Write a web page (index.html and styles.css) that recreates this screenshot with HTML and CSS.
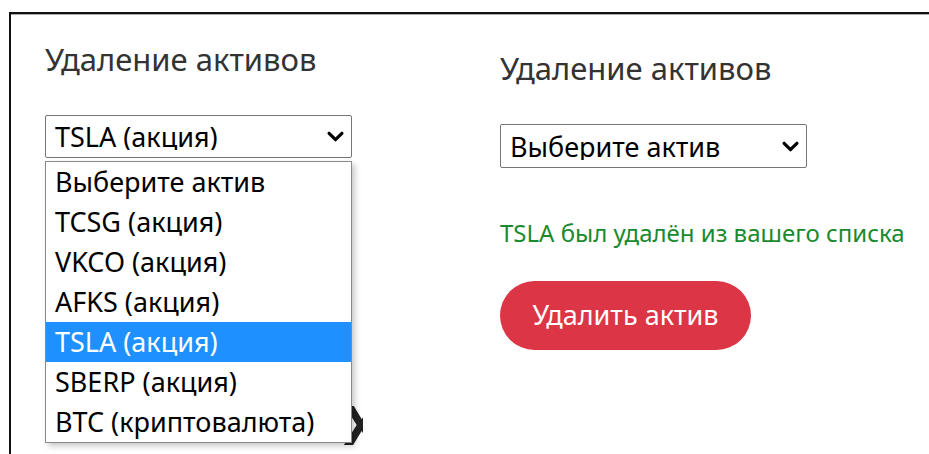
FILE: index.html
```html
<!DOCTYPE html>
<html lang="ru">
<head>
<meta charset="utf-8">
<title>Удаление активов</title>
<link rel="stylesheet" href="styles.css">
</head>
<body>
<div class="frame">
  <section class="panel panel-open">
    <h2 class="panel-title">Удаление активов</h2>
    <div class="picker">
      <div class="select-wrap">
        <select class="select" aria-label="Актив">
          <option>TSLA (акция)</option>
        </select>
        <svg class="chevron" viewBox="0 0 16 10" aria-hidden="true"><polyline points="2,2 8,8 14,2"/></svg>
      </div>
      <ul class="options" role="listbox">
        <li class="option">Выберите актив</li>
        <li class="option">TCSG (акция)</li>
        <li class="option">VKCO (акция)</li>
        <li class="option">AFKS (акция)</li>
        <li class="option is-active">TSLA (акция)</li>
        <li class="option">SBERP (акция)</li>
        <li class="option">BTC (криптовалюта)</li>
      </ul>
    </div>
    <div class="summary"><span class="summary-text">X</span></div>
  </section>

  <section class="panel panel-done">
    <h2 class="panel-title">Удаление активов</h2>
    <div class="select-wrap">
      <select class="select" aria-label="Актив">
        <option>Выберите актив</option>
      </select>
      <svg class="chevron" viewBox="0 0 16 10" aria-hidden="true"><polyline points="2,2 8,8 14,2"/></svg>
    </div>
    <p class="notice">TSLA был удалён из вашего списка</p>
    <button class="btn-danger" type="button">Удалить актив</button>
  </section>
</div>
</body>
</html>
```

FILE: styles.css
```css
* { box-sizing: border-box; }

html, body {
  margin: 0;
  height: 100%;
  background: #fff;
  overflow: hidden;
}

body {
  font-family: "Noto Sans", "Open Sans", sans-serif;
  color: #000;
}

.frame {
  margin: 12px 0 0 9px;
  height: calc(100% - 12px);
  border-top: 2px solid #111;
  border-left: 2px solid #111;
  box-shadow: inset 0 1px 0 #a8a8a8;
  padding-left: 34px;
  display: grid;
  grid-template-columns: 455px 1fr;
  align-items: start;
}

.panel {
  display: flex;
  flex-direction: column;
  align-items: flex-start;
}

.panel-title {
  margin: 0;
  font-size: 31px;
  font-weight: 400;
  line-height: 1;
  color: #333;
}

.panel-open .panel-title { margin-top: 30px; }
.panel-done .panel-title { margin-top: 39px; }

.picker {
  position: relative;
  margin-top: 40px;
}

.select-wrap {
  display: grid;
  align-items: center;
}

.select-wrap > * { grid-area: 1 / 1; }

.select {
  -webkit-appearance: none;
  appearance: none;
  width: 307px;
  height: 43px;
  margin: 0;
  padding: 0 30px 0 9px;
  border: 1px solid #767676;
  border-radius: 2px;
  background: #fff;
  font-family: inherit;
  font-size: 27px;
  color: #000;
  line-height: 1;
}

.chevron {
  justify-self: end;
  margin-right: 8px;
  width: 17px;
  height: 11px;
  fill: none;
  stroke: #000;
  stroke-width: 3;
  stroke-linecap: round;
  stroke-linejoin: round;
  pointer-events: none;
}

/* open list of the left picker, laid over the content below */
.options {
  position: absolute;
  top: 46px;
  left: 0;
  z-index: 2;
  width: 307px;
  margin: 0;
  padding: 0;
  list-style: none;
  background: #fff;
  border: 1px solid #8a8a8a;
  box-shadow: 3px 3px 6px rgba(0, 0, 0, 0.22);
}

.option {
  height: 40px;
  padding-left: 9px;
  font-size: 27px;
  line-height: 40px;
  white-space: nowrap;
  color: #000;
}

.option.is-active {
  background: #1e90ff;
  color: #fff;
}

/* large mark partly hidden by the open list; clipped at its right edge */
.summary {
  display: flex;
  justify-content: flex-end;
  width: 318px;
  margin-top: 239px;
  overflow: hidden;
  white-space: nowrap;
}

.summary-text {
  flex-shrink: 0;
  margin-right: -17px;
  font-size: 54px;
  font-weight: 700;
  line-height: 1;
  color: #222;
}

.panel-done .select-wrap { margin-top: 40px; }

.panel-done .select { height: 44px; }

.notice {
  margin: 53px 0 0 0;
  font-size: 24px;
  line-height: 1;
  color: #1a8a2e;
}

.btn-danger {
  margin-top: 36px;
  width: 251px;
  height: 69px;
  border: 0;
  border-radius: 35px;
  background: #dc3545;
  color: #fff;
  font-family: inherit;
  font-size: 27px;
  padding: 0 0 2px 0;
}
```
